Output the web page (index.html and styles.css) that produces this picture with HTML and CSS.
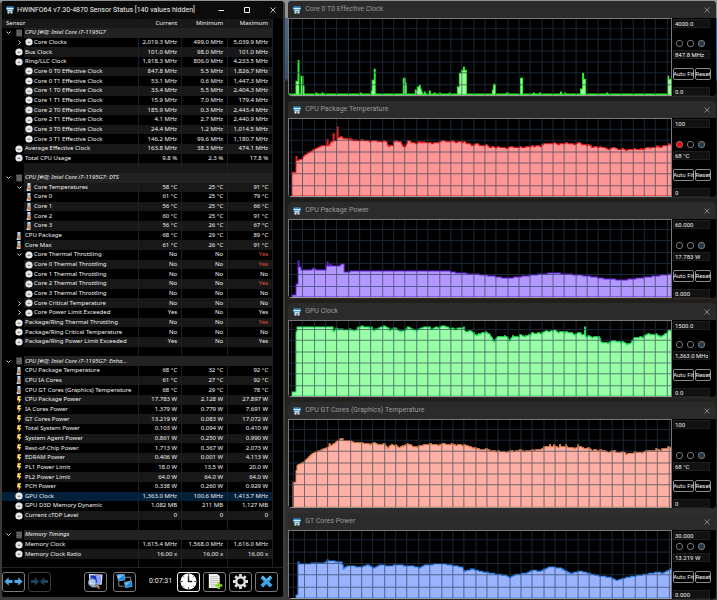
FILE: index.html
```html
<!DOCTYPE html>
<html lang="en">
<head>
<meta charset="utf-8">
<title>HWiNFO64 Sensor Status</title>
<link rel="stylesheet" href="styles.css">
</head>
<body>
<svg class="sprite" aria-hidden="true">
  <symbol id="i-app" viewBox="0 0 16 16"><path fill="#4aa5e2" d="M1 1h14v8H1z"/><path fill="#e2f1fc" d="M1 4h14v2H1z"/><path fill="#1f6aa5" d="M5 1h2v3H5zM10 1h2v3h-2z"/><path fill="#b9dcf4" d="M3 8h10v3H3z"/><path fill="#eef6fc" d="M3 11h3v4H3zM7 11h2v4H7zM10 11h3v4h-3z"/></symbol>
  <symbol id="i-dial" viewBox="0 0 14 14"><circle cx="7" cy="7" r="6.3" fill="#e9e9e9"/><path d="M4.500 7.500h5" stroke="#555" stroke-width="1.4"/></symbol>
  <symbol id="i-temp" viewBox="0 0 14 16"><path fill="#b9dcf2" d="M4 0h6v16H3v-4l1-1z"/><path fill="#5d9cc6" d="M4 0h1v10H4zM2 12h1v4H2z"/><path fill="#e8762a" d="M6 4h2v5h2v5H5V9h1z"/></symbol>
  <symbol id="i-volt" viewBox="0 0 14 16"><path fill="#e79a1c" d="M4 0h7v4H9v2h3L6 16V9H3z"/><path fill="#fff07a" d="M5 1h3L7 6h3L7 12V8H4z"/></symbol>
  <symbol id="i-chip" viewBox="0 0 14 16"><path fill="#555" d="M2 1h11v14H2z"/><path stroke="#777" d="M1 3h12M1 6h12M1 9h12M1 12h12"/></symbol>
  <symbol id="i-down" viewBox="0 0 10 10"><path fill="none" stroke="#d0d0d0" stroke-width="2" d="M1 3l4 4 4-4"/></symbol>
  <symbol id="i-right" viewBox="0 0 10 10"><path fill="none" stroke="#d0d0d0" stroke-width="2" d="M3 1l4 4-4 4"/></symbol>
  <symbol id="i-close" viewBox="0 0 12 12"><path fill="none" stroke="currentColor" stroke-width="1.6" d="M1 1l10 10M11 1L1 11"/></symbol>
</svg>

<main class="desktop">
  <section class="window sensors">
    <header class="titlebar">
      <svg class="app-icon"><use href="#i-app"/></svg>
      <h1 class="title">HWiNFO64 v7.30-4870 Sensor Status [140 values hidden]</h1>
      <div class="window-buttons">
        <button class="window-button" aria-label="Minimize"><svg viewBox="0 0 12 12"><path stroke="currentColor" stroke-width="2" d="M1 7h11"/></svg></button>
        <button class="window-button" aria-label="Maximize"><svg viewBox="0 0 12 12"><path fill="none" stroke="currentColor" stroke-width="2" d="M1 1h10v10H1z"/></svg></button>
        <button class="window-button" aria-label="Close"><svg><use href="#i-close"/></svg></button>
      </div>
    </header>

    <div class="sensor-list">
      <table class="sensor-table">
        <colgroup><col class="col-gutter"><col><col class="col-current"><col class="col-minimum"><col class="col-maximum"></colgroup>
        <thead><tr><th colspan="2">Sensor</th><th class="num">Current</th><th class="num">Minimum</th><th class="num">Maximum</th></tr></thead>
        <tbody id="rows"></tbody>
      </table>
    </div>

    <footer class="toolbar">
      <div class="tool-group">
        <button class="tool" aria-label="Expand columns"><svg viewBox="0 0 40 24"><path fill="#4aa8e8" d="M1 12L10 3v6h8v6h-8v6zM39 12L30 3v6h-8v6h8v6z"/></svg></button>
        <button class="tool dim" aria-label="Shrink columns"><svg viewBox="0 0 40 24"><path fill="#4aa8e8" d="M19 12L10 3v6H2v6h8v6zM21 12l9-9v6h8v6h-8v6z"/></svg></button>
      </div>
      <div class="tool-group wide">
        <button class="tool" aria-label="System summary"><svg viewBox="0 0 40 36"><path fill="#dbe4ee" d="M6 2l29 1-2 22-26-1z"/><path fill="#1c33c8" d="M9 5l23 1-2 16-20-1z"/><path fill="#8fa2ff" d="M21 6l11 0-2 16-6 0z"/><path fill="#b5c3d0" d="M14 26h12l3 4H10z"/><path stroke="#a4683f" stroke-width="3" d="M18 25l11 9"/><circle cx="13" cy="20" r="8" fill="#cbe3f5" fill-opacity=".8" stroke="#7890a8" stroke-width="2"/></svg></button>
        <button class="tool" aria-label="Remote monitoring"><svg viewBox="0 0 40 36"><path fill="none" stroke="#8b8b8b" stroke-width="2" d="M21 9h12v9M8 19v9h12"/><path fill="#9cc4e4" d="M3 3l17-1 2 13-15 3zM19 19l16-3 2 13-15 3z"/><path fill="#2086d8" d="M4 4l15-1 2 11-13 3zM20 20l14-3 2 11-13 3z"/><path fill="#7cc4f4" d="M5 5l13-1-11 9zM21 21l12-2-10 8z"/></svg></button>
      </div>
      <time class="elapsed">0:07:31</time>
      <div class="tool-group">
        <button class="tool bright" aria-label="Reset timer"><svg viewBox="0 0 36 36"><circle cx="18" cy="18" r="17" fill="#fff"/><path fill="none" stroke="#222" stroke-width="3" d="M18 7v11h8"/><path stroke="#444" stroke-width="2" d="M18 2v4M18 30v4M2 18h4M30 18h4M7 7l2 2M27 27l2 2M7 29l2-2M27 9l2-2"/></svg></button>
        <button class="tool" aria-label="Log to file"><svg viewBox="0 0 36 36"><path fill="#f3f3f0" d="M6 2h18l5 5v25H6z"/><path stroke="#aaa" stroke-width="1.5" d="M9 8h15M9 12h17M9 16h17M9 20h17M9 24h10M9 28h10"/><path stroke="#8bd02b" stroke-width="5" d="M27 19v15M19.500 26.500h15"/></svg></button>
        <button class="tool" aria-label="Settings"><svg viewBox="0 0 36 36"><circle cx="18" cy="18" r="9" fill="none" stroke="#e0e0e0" stroke-width="5"/><path stroke="#e0e0e0" stroke-width="6" d="M18 2v6M18 28v6M2 18h6M28 18h6M7 7l4 4M25 25l4 4M7 29l4-4M25 11l4-4"/></svg></button>
        <button class="tool" aria-label="Close sensors"><svg viewBox="0 0 36 36"><path stroke="#3fa3e6" stroke-width="8" d="M8 8l20 20M28 8L8 28"/><path stroke="#8ccbf5" stroke-width="2" d="M8 6l9 9M28 6l-9 9"/></svg></button>
      </div>
    </footer>
  </section>

  <div class="graphs" id="graphs"></div>
</main>

<template id="graph-template">
  <section class="window graph">
    <header class="titlebar">
      <svg class="app-icon"><use href="#i-app"/></svg>
      <h2 class="title"></h2>
      <button class="window-button" aria-label="Close"><svg><use href="#i-close"/></svg></button>
    </header>
    <div class="graph-body">
      <div class="plot"></div>
      <div class="controls">
        <input class="field top" aria-label="Upper limit" readonly>
        <div class="control-group">
          <div class="swatches">
            <button class="swatch line" aria-label="Line color"></button>
            <button class="swatch" aria-label="Background color"></button>
            <button class="swatch grid" aria-label="Grid color"></button>
          </div>
          <input class="field value" aria-label="Current value" readonly>
          <div class="actions">
            <button class="action fit">Auto Fit</button>
            <button class="action">Reset</button>
          </div>
        </div>
        <input class="field bottom" aria-label="Lower limit" readonly>
      </div>
    </div>
  </section>
</template>
<script src="app.js"></script>
</body>
</html>
```
FILE: styles.css
```css
* { box-sizing: border-box; }

body {
  margin: 0;
  background: #14110f;
  color: #f0f0f0;
  font: 6px/9px "Noto Sans", "Open Sans", sans-serif;
}

h1, h2 { margin: 0; font: inherit; }

button, input {
  margin: 0;
  padding: 0;
  border: 0;
  background: none;
  color: inherit;
  font: inherit;
}

svg { display: block; }
.sprite { display: none; }

.desktop {
  display: grid;
  grid-template-columns: minmax(0, 2fr) minmax(0, 3fr);
  gap: 3px;
  height: 100vh;
  padding: 1px 1px 0 0;
  background: linear-gradient(#8f9194 18px, #4b6788 18px, #38506e 78px, #1d1b1a 82px, #25211c 400px, #3a3a3a 600px);
}

.window {
  display: flex;
  flex-direction: column;
  min-height: 0;
  overflow: hidden;
  border-radius: 4px;
}

.titlebar {
  display: flex;
  flex: none;
  align-items: center;
  gap: 4px;
  height: 18px;
  padding: 0 5px;
  font-family: Roboto, "Noto Sans", sans-serif;
  font-size: 7px;
}

.app-icon { width: 8px; height: 8px; }

.title {
  flex: 1;
  white-space: nowrap;
}

.window-buttons { display: flex; gap: 18px; }

.window-button {
  width: 8px;
  height: 8px;
  padding: 1px;
}

.window-button svg { width: 6px; height: 6px; }

/* Sensor window */

.sensors {
  margin-bottom: 2px;
  border: 0 solid #3a3a3a;
  border-width: 0 2px 1px;
  background: #000;
}

.sensors .titlebar {
  gap: 3px;
  padding: 0 6px 0 4px;
  background: #0b0b0b;
}

.sensor-list {
  flex: 1;
  min-height: 0;
  padding-right: 10px;
  border-bottom: 1px solid #222;
}

.sensor-table {
  width: 100%;
  height: 100%;
  border-collapse: collapse;
  table-layout: fixed;
}

.col-gutter { width: 22px; }
.col-current { width: 43px; }
.col-minimum { width: 46px; }
.col-maximum { width: 45px; }

.sensor-table th,
.sensor-table td {
  padding: 0;
  overflow: hidden;
  font-weight: normal;
  text-align: left;
  white-space: nowrap;
}

.sensor-table th {
  padding-left: 4px;
  background: #181818;
}

.sensor-table .num {
  padding-right: 4px;
  border-left: 1px solid #1b212b;
  text-align: right;
}

.sensor-table tr > .num:last-child { border-right: 1px solid #1b212b; }

.sensor-table .name { padding-left: 1px; }
.striped td:not(.gutter) { background: #181818; }
.group td:not(.gutter) { background: #222; }
.group .name { font-style: italic; }
.sensor-table .selected td:nth-child(n) { background: #03203a; }
.sensor-table .alert { color: #e0504a; }
.sensor-table tr:last-child td { line-height: 7px; }

.slots {
  display: grid;
  grid-template-columns: 12px 10px;
  align-items: center;
  justify-items: center;
}

.nested-label {
  display: flex;
  align-items: center;
  gap: 1px;
}

.icon { flex: none; width: 8px; height: 8px; }
.chevron { width: 5px; height: 5px; }
.slots .chevron { grid-column: 1; }
.slots .icon, .slots .inner { grid-column: 2; grid-row: 1; }

/* Toolbar */

.toolbar {
  display: flex;
  flex: none;
  align-items: center;
  justify-content: space-between;
  height: 29px;
  padding: 0 5px 2px 0;
}

.tool-group { display: flex; gap: 3px; }
.tool-group.wide { gap: 6px; margin-left: 28px; }
.elapsed { margin-left: 8px; font-family: Roboto, "Noto Sans", sans-serif; font-size: 7px; }

.tool {
  display: grid;
  place-items: center;
  width: 23px;
  height: 20px;
  border: 1px solid #7a7a7a;
  border-radius: 3px;
}

.tool svg { width: 19px; height: 17px; }
.tool.bright { border-color: #eee; }
.tool.dim { border-color: #3c3c3c; }
.tool.dim svg { opacity: 0.4; }

/* Graph windows */

.graphs {
  display: grid;
  grid-template-rows: 96fr 97fr 97fr 95fr 107fr 87fr;
  gap: 4px;
  min-height: 0;
}

.graph { background: #000; border-bottom: 1px solid #2c2c2c; }
.graph .titlebar { height: 17px; background: #2b2b2b; color: #999; }

.graph-body {
  display: flex;
  flex: 1;
  min-height: 0;
}

.plot {
  flex: 1;
  min-width: 0;
  border: 1px solid #777;
  border-bottom-color: #999;
}

.plot svg { width: 100%; height: 100%; }

.fill { stroke-width: 1; }
.lines { fill: none; stroke: rgb(40, 60, 80); stroke-opacity: 0.65; }

.controls {
  display: flex;
  flex-direction: column;
  width: 44px;
  padding: 1px 5px 0 1px;
  font-family: Roboto, "Noto Sans", sans-serif;
}

.field {
  display: block;
  flex: none;
  width: 37px;
  height: 9px;
  padding: 0 1px;
  border: 1px solid #1f1f1f;
  background: #111;
  line-height: 7px;
}

.control-group { margin: auto 0 7px; }

.swatches {
  display: flex;
  gap: 4px;
  padding: 0 3px;
  margin-bottom: 3px;
}

.swatch {
  width: 7px;
  height: 7px;
  border: 1px solid #777;
  border-radius: 3px;
}

.swatch.grid { background: #26384a; }
.red .swatch.line { background: #f00; }

.actions {
  display: flex;
  gap: 1px;
  margin-top: 9px;
}

.action {
  display: flex;
  flex: none;
  align-items: center;
  justify-content: center;
  width: 16px;
  height: 12px;
  border: 1px solid #8a8a8a;
  border-radius: 2px;
  line-height: 10px;
  white-space: nowrap;
}

.action.fit { width: 21px; }

.green .fill { fill: #99ff99; stroke: #2bf02b; }
.red .fill { fill: #ff9696; stroke: #f21d1d; }
.violet .fill { fill: #b399ff; stroke: #6d22e8; }
.mint .fill { fill: #99ffa6; stroke: #1ee65c; }
.salmon .fill { fill: #ffb0a4; stroke: #ee8850; }
.blue .fill { fill: #99b3ff; stroke: #2f86f5; }
```
FILE: app.js
```js
// name | current | minimum | maximum | icon | level | chevron
// level 0 is a group heading, 1 a sensor, 2 a nested sensor
const rows = `
CPU [#0]: Intel Core i7-1195G7||||chip|0|down
Core Clocks|2,019.3 MHz|499.0 MHz|5,039.9 MHz|dial|2|right
Bus Clock|101.0 MHz|98.0 MHz|101.0 MHz|dial|1
Ring/LLC Clock|1,918.3 MHz|806.0 MHz|4,233.5 MHz|dial|1
Core 0 T0 Effective Clock|847.8 MHz|5.5 MHz|1,826.7 MHz|dial|2
Core 0 T1 Effective Clock|53.1 MHz|0.6 MHz|1,447.3 MHz|dial|2
Core 1 T0 Effective Clock|33.4 MHz|5.5 MHz|2,404.3 MHz|dial|2
Core 1 T1 Effective Clock|15.9 MHz|7.0 MHz|179.4 MHz|dial|2
Core 2 T0 Effective Clock|185.9 MHz|0.3 MHz|2,443.4 MHz|dial|2
Core 2 T1 Effective Clock|4.1 MHz|2.7 MHz|2,440.9 MHz|dial|2
Core 3 T0 Effective Clock|24.4 MHz|1.2 MHz|1,014.5 MHz|dial|2
Core 3 T1 Effective Clock|146.2 MHz|99.6 MHz|1,180.7 MHz|dial|2
Average Effective Clock|163.8 MHz|38.3 MHz|474.1 MHz|dial|1
Total CPU Usage|9.8 %|2.3 %|17.8 %|dial|1
-
CPU [#0]: Intel Core i7-1195G7: DTS||||chip|0|down
Core Temperatures|58 °C|25 °C|91 °C|temp|2|down
Core 0|61 °C|25 °C|79 °C|temp|2
Core 1|56 °C|25 °C|66 °C|temp|2
Core 2|60 °C|25 °C|91 °C|temp|2
Core 3|56 °C|26 °C|67 °C|temp|2
CPU Package|68 °C|29 °C|89 °C|temp|1
Core Max|61 °C|26 °C|91 °C|temp|1
Core Thermal Throttling|No|No|!Yes|dial|2|down
Core 0 Thermal Throttling|No|No|!Yes|dial|2
Core 1 Thermal Throttling|No|No|No|dial|2
Core 2 Thermal Throttling|No|No|!Yes|dial|2
Core 3 Thermal Throttling|No|No|No|dial|2
Core Critical Temperature|No|No|No|dial|2|right
Core Power Limit Exceeded|Yes|No|Yes|dial|2|right
Package/Ring Thermal Throttling|No|No|!Yes|dial|1
Package/Ring Critical Temperature|No|No|No|dial|1
Package/Ring Power Limit Exceeded|Yes|No|Yes|dial|1
-
CPU [#0]: Intel Core i7-1195G7: Enha...||||chip|0|down
CPU Package Temperature|68 °C|32 °C|92 °C|temp|1
CPU IA Cores|61 °C|27 °C|92 °C|temp|1
CPU GT Cores (Graphics) Temperature|68 °C|29 °C|78 °C|temp|1
CPU Package Power|17.783 W|2.128 W|27.897 W|volt|1
IA Cores Power|1.379 W|0.779 W|7.691 W|volt|1
GT Cores Power|13.219 W|0.083 W|17.072 W|volt|1
Total System Power|0.103 W|0.094 W|0.410 W|volt|1
System Agent Power|0.861 W|0.250 W|0.990 W|volt|1
Rest-of-Chip Power|1.713 W|0.367 W|2.073 W|volt|1
EDRAM Power|0.406 W|0.001 W|4.113 W|volt|1
PL1 Power Limit|18.0 W|13.5 W|20.0 W|volt|1
PL2 Power Limit|64.0 W|64.0 W|64.0 W|volt|1
PCH Power|0.338 W|0.260 W|0.929 W|volt|1
GPU Clock|1,363.0 MHz|100.6 MHz|1,413.7 MHz|dial|1
GPU D3D Memory Dynamic|1,082 MB|211 MB|1,127 MB|dial|1
Current cTDP Level|0|0|0|dial|1
-
Memory Timings||||chip|0|down
Memory Clock|1,615.4 MHz|1,568.0 MHz|1,616.0 MHz|dial|1
Memory Clock Ratio|16.00 x|16.00 x|16.00 x|dial|1
-`.trim().split("\n");

const use = (id, cls) => `<svg class="${cls}"><use href="#i-${id}"/></svg>`;

document.getElementById("rows").innerHTML = rows.map((line, i) => {
  const blank = line === "-";
  const [name, cur, min, max, icon, level, chevron] = blank ? ["", "", "", ""] : line.split("|");
  const classes = [];
  if (i % 2 === 0) classes.push("striped");
  if (level === "0") classes.push("group");
  if (name === "GPU Clock") classes.push("selected");
  let slots = "";
  if (chevron) slots += use(chevron, level === "2" ? "chevron inner" : "chevron");
  if (!blank && level !== "2") slots += use(icon, "icon");
  const label = level === "2" ? `<div class="nested-label">${use(icon, "icon")}<span>${name}</span></div>` : name;
  const cells = [cur, min, max].map(v =>
    v.startsWith("!") ? `<td class="num alert">${v.slice(1)}</td>` : `<td class="num">${v}</td>`).join("");
  return `<tr class="${classes.join(" ")}"><td class="gutter"><div class="slots">${slots}</div></td><td class="name">${label || "&nbsp;"}</td>${cells}</tr>`;
}).join("");

// Each graph holds knots (x height ...) joined by straight runs, and
// single-sample peaks that rise above them. Heights count from the base line.
const graphs = [
  { title: "Core 0 T0 Effective Clock", color: "green", top: "4000.0", value: "847.8 MHz", bottom: "0.0", h: 77, first: 2, jitter: 0,
    knots: "0 1 381 1",
    peaks: "7 14 8 14 9 35 12 19 13 19 14 9 27 2 33 2 71 2 82 4 83 15 84 15 85 26 114 17 115 17 116 12 126 5 127 5 128 8 129 8 130 10 131 6 132 3 135 3 140 4 145 2 150 2 160 2 168 8 169 8 170 22 171 22 172 25 173 25 174 28 175 25 176 25 203 5 204 11 205 11 217 2 218 2 231 17 232 17 244 2 250 2 271 3 275 2 291 6 292 6 293 22 294 16 295 16 317 2 378 19 379 16 380 16 381 16" },
  { title: "CPU Package Temperature", color: "red", top: "100", value: "68 °C", bottom: "0", h: 78, first: 2, jitter: 1,
    knots: "3 24 6 24 7 36 12 37 15 41 23 46 28 49 33 51 39 51 42 55 48 56 49 59 55 58 70 56 97 55 99 51 103 51 104 55 111 55 113 51 116 51 118 55 128 53 132 55 142 53 150 55 170 55 182 52 195 51 208 49 224 49 243 50 260 53 288 53 310 49 333 47 345 47 357 48 370 50 381 52",
    peaks: "7 40 38 57 44 63 48 70" },
  { title: "CPU Package Power", color: "violet", top: "60.000", value: "17.783 W", bottom: "0.000", h: 77, first: 2, jitter: 0,
    knots: "3 2 6 2 7 13 8 13 9 30 11 30 12 27 22 27 24 29 27 27 36 27 37 31 50 31 52 33 54 33 55 25 66 26 158 26 168 24 185 23 202 21 215 19 220 19 243 22 263 24 277 23 297 21 317 18 333 17 350 19 381 23",
    peaks: "9 36 38 35 41 33" },
  { title: "GPU Clock", color: "mint", top: "1500.0", value: "1,363.0 MHz", bottom: "0.0", h: 76, first: 2, jitter: 1,
    knots: "3 4 6 4 7 65 8 70 43 70 44 65 47 69 50 67 67 67 69 70 82 70 84 65 88 68 92 70 99 70 100 66 104 69 111 65 118 69 128 66 132 70 139 70 141 67 147 70 158 70 160 68 174 69 175 65 182 66 187 60 192 64 200 63 204 55 207 59 217 61 220 55 223 60 237 61 243 63 253 64 263 66 270 65 294 62 296 60 309 60 311 54 327 55 340 53 344 58 360 62 373 61 381 67",
    peaks: "295 70" },
  { title: "CPU GT Cores (Graphics) Temperature", color: "salmon", top: "100", value: "68 °C", bottom: "0", h: 88, first: 4, jitter: 1,
    knots: "4 25 6 25 7 37 8 42 15 46 23 54 35 59 42 62 50 68 62 66 75 64 95 63 98 60 102 63 110 60 116 63 128 60 132 63 148 63 168 63 182 61 187 58 198 58 208 56 243 57 252 59 260 61 290 60 310 57 340 54 357 56 381 60",
    peaks: "40 64 260 63 264 63 270 63 276 63 288 63" },
  { title: "GT Cores Power", color: "blue", top: "30.000", value: "13.219 W", bottom: "0.000", h: 65, first: 4, jitter: 0,
    knots: "7 3 8 3 9 33 35 34 38 36 52 35 54 28 58 31 72 30 78 32 85 29 90 32 100 31 108 32 118 31 123 31 130 29 135 32 153 33 172 30 175 26 182 28 195 25 208 23 215 22 220 20 227 23 237 24 243 27 250 26 260 30 270 29 281 24 290 26 310 21 320 20 327 17 337 20 350 22 367 25 373 24 381 28",
    peaks: "9 35 38 37" }
];

const WIDTH = 381;
const STEP = 11.35;

function pairs(text) {
  const n = text.split(" ").map(Number);
  return n.filter((_, i) => i % 2 === 0).map((x, i) => [x, n[2 * i + 1]]);
}

function samples(g) {
  const knots = pairs(g.knots);
  const peaks = new Map(pairs(g.peaks));
  const noise = [0, 0, 1, 0, 0, 0, -1, 0, 1, 1, 0, 0, 0, 1, 0, -1, 0];
  const out = [];
  for (let x = knots[0][0]; x <= WIDTH; x++) {
    let k = knots.findIndex(p => p[0] > x);
    if (k < 0) k = knots.length - 1;
    const [x0, y0] = knots[k - 1];
    const [x1, y1] = knots[k];
    let y = Math.round(y0 + (y1 - y0) * (x - x0) / (x1 - x0));
    if (g.jitter && x > 50) y += noise[(x >> 1) % noise.length];
    out.push([x, peaks.has(x) ? peaks.get(x) : y]);
  }
  return out;
}

function plot(g) {
  const pts = samples(g);
  let d = `M${pts[0][0]} ${g.h}`;
  pts.forEach(([x, y]) => { d += `V${g.h - y}H${x + 1}`; });
  d += `V${g.h}Z`;
  let grid = "";
  for (let x = g.first; x < WIDTH; x += STEP) grid += `M${Math.round(x) + 0.5} 0V${g.h}`;
  for (let y = g.h - STEP; y > 0; y -= STEP) grid += `M0 ${Math.round(y) + 0.5}H${WIDTH}`;
  return `<svg viewBox="0 0 ${WIDTH} ${g.h}" preserveAspectRatio="none"><path class="fill" d="${d}"/><path class="lines" d="${grid}"/></svg>`;
}

const template = document.getElementById("graph-template");
graphs.forEach(g => {
  const node = template.content.cloneNode(true);
  node.querySelector(".graph").classList.add(g.color);
  node.querySelector(".title").textContent = g.title;
  node.querySelector(".plot").innerHTML = plot(g);
  for (const key of ["top", "value", "bottom"]) node.querySelector(".field." + key).value = g[key];
  document.getElementById("graphs").append(node);
});
```
